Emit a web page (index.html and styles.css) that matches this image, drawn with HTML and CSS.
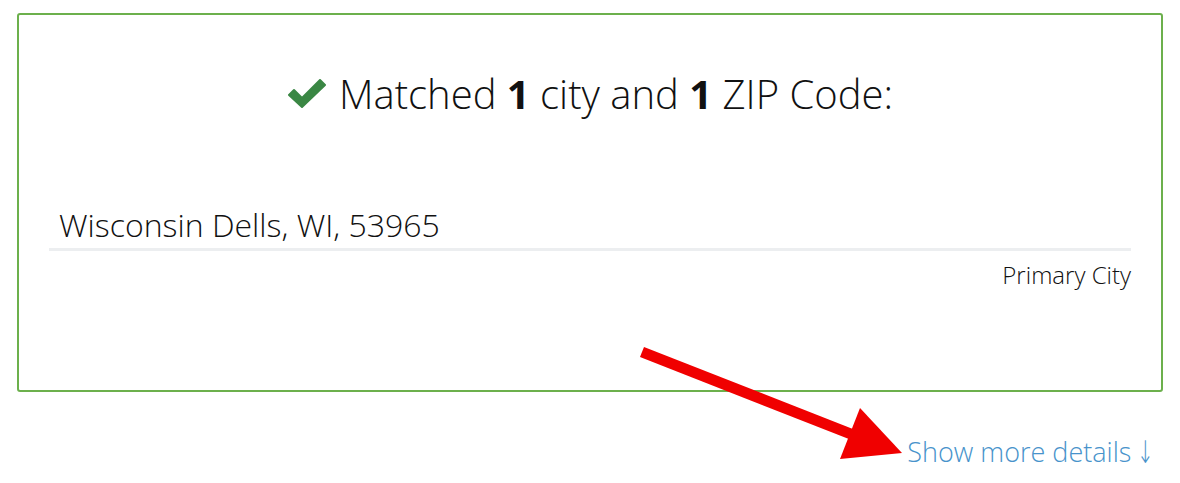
FILE: index.html
```html
<!DOCTYPE html>
<html lang="en">
<head>
<meta charset="utf-8">
<title>ZIP lookup result</title>
<link rel="stylesheet" href="styles.css">
</head>
<body>
<div class="page">
  <section class="result">
    <h2 class="result-title">
      <svg class="check" viewBox="0 0 40 29" aria-hidden="true">
        <path d="M2 16 L7 11 L15 19 L33 1 L38 6 L15 28 Z" fill="#3a8744" stroke="#3a8744" stroke-width="2" stroke-linejoin="round"/>
      </svg>
      <span>Matched <b>1</b> city and <b>1</b> ZIP Code:</span>
    </h2>
    <div class="match">
      <div class="match-name">Wisconsin Dells, WI, 53965</div>
      <div class="match-type">Primary City</div>
    </div>
  </section>
  <div class="more">
    <a class="more-link" href="#">Show more details <span class="down">↓</span></a>
  </div>
  <svg class="annot" viewBox="0 0 1180 483" aria-hidden="true">
    <line x1="642" y1="352" x2="856" y2="436" stroke="#f00000" stroke-width="11"/>
    <polygon points="860,408 840,459 902,453" fill="#f00000"/>
  </svg>
</div>
</body>
</html>
```

FILE: styles.css
```css
html, body {
  margin: 0;
  padding: 0;
  background: #ffffff;
}

body {
  font-family: "Open Sans", "Liberation Sans", sans-serif;
  font-weight: 300;
  color: #111111;
  width: 1180px;
  height: 483px;
  overflow: hidden;
}

.page {
  position: relative;
  padding: 13px 17px 0 17px;
}

.result {
  border: 2px solid #6cb04c;
  border-radius: 3px;
  height: 375px;
  padding: 0 30px;
}

.result-title {
  margin: 53px 0 0 0;
  display: flex;
  justify-content: center;
  align-items: center;
  gap: 12px;
  font-size: 40px;
  font-weight: 300;
  line-height: 52px;
}

.result-title b {
  font-weight: 700;
}

.check {
  width: 40px;
  height: 29px;
  margin-top: -2px;
}

.match {
  margin-top: 85px;
}

.match-name {
  font-size: 32px;
  line-height: 40px;
  padding: 0 10px 3px 10px;
  border-bottom: 3px solid #eceef0;
}

.match-type {
  text-align: right;
  font-size: 24px;
  line-height: 30px;
  margin-top: 9px;
}

.more {
  display: flex;
  justify-content: flex-end;
  padding-right: 6px;
  margin-top: 42px;
}

.more-link {
  color: #4893cb;
  text-decoration: none;
  font-size: 27px;
  line-height: 36px;
}

.down {
  font-family: "DejaVu Sans", sans-serif;
  display: inline-block;
  margin-left: -4px;
  transform: scaleX(0.75) scaleY(1.15);
}

.annot {
  position: absolute;
  left: 0;
  top: 0;
  width: 1180px;
  height: 483px;
  pointer-events: none;
}
```
